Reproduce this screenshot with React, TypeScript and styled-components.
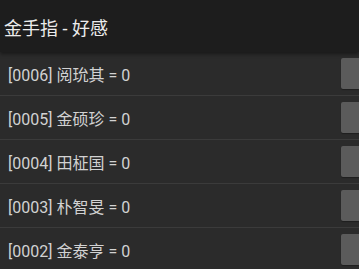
import styled, { createGlobalStyle } from 'styled-components';

const GlobalStyle = createGlobalStyle`
	html, body {
		margin: 0;
		padding: 0;
		background: #2b2b2b;
		overflow: hidden;
	}
	body {
		font-family: Roboto, "Noto Sans CJK SC", sans-serif;
	}
`;

type Entry = {
	id: string;
	name: string;
	value: number;
};

const entries: Entry[] = [
	{ id: '0006', name: '阅玧其', value: 0 },
	{ id: '0005', name: '金硕珍', value: 0 },
	{ id: '0004', name: '田柾国', value: 0 },
	{ id: '0003', name: '朴智旻', value: 0 },
	{ id: '0002', name: '金泰亨', value: 0 },
];

const App = () => {
	return (
		<>
			<GlobalStyle />
			<Screen>
				<Header>
					<Title>金手指 - 好感</Title>
				</Header>
				<List>
					{entries.map((e) => (
						<Row key={e.id}>
							<Label>
								[{e.id}] {e.name} = {e.value}
							</Label>
							<EditButton />
						</Row>
					))}
				</List>
			</Screen>
		</>
	);
};

export default App;

const Screen = styled.div`
	width: 359px;
	height: 269px;
	display: flex;
	flex-direction: column;
	background: #2b2b2b;
	overflow: hidden;
`;

const Header = styled.div`
	height: 52px;
	flex-shrink: 0;
	display: flex;
	align-items: center;
	padding: 0 4px;
	background: #1d1d1d;
	box-shadow: 0 2px 4px rgba(0, 0, 0, 0.45);
	position: relative;
	z-index: 1;
`;

const Title = styled.div`
	font-size: 18px;
	color: #ececec;
	padding-top: 2px;
`;

const List = styled.div`
	display: flex;
	flex-direction: column;
`;

const Row = styled.div`
	height: 43px;
	flex-shrink: 0;
	display: flex;
	align-items: center;
	justify-content: space-between;
	padding-left: 8px;
	border-bottom: 1px solid #3b3b3b;
`;

const Label = styled.div`
	font-size: 16px;
	color: #d2d2d2;
`;

const EditButton = styled.div`
	width: 18px;
	height: 31px;
	background: #5b5b5b;
	border-radius: 2px 0 0 2px;
	box-shadow: 0 1px 1px rgba(0, 0, 0, 0.3);
`;
